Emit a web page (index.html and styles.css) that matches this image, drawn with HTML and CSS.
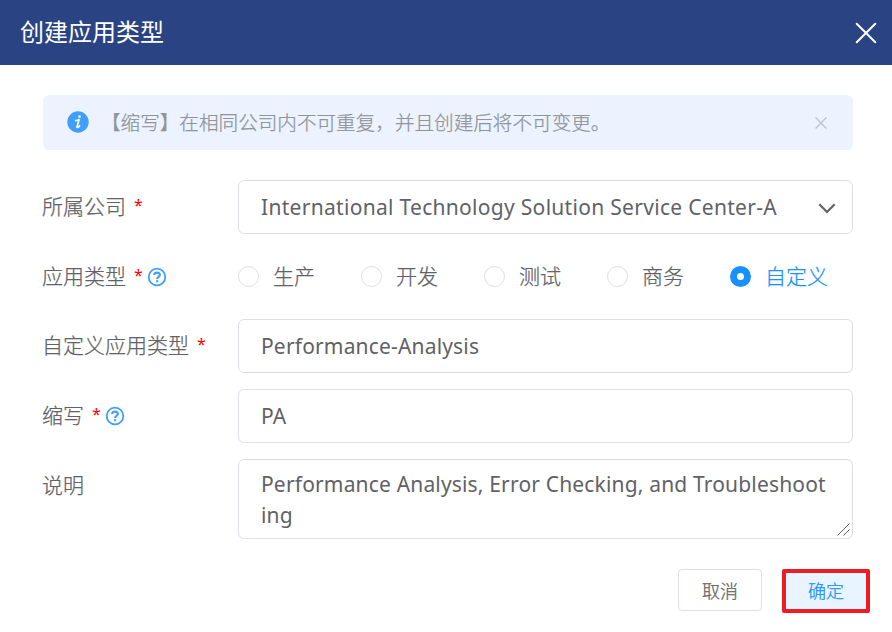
FILE: index.html
```html
<!DOCTYPE html>
<html lang="zh-CN">
<head>
<meta charset="utf-8">
<title>创建应用类型</title>
<link rel="stylesheet" href="styles.css">
</head>
<body>
<div class="dialog">
  <header class="dialog-header">
    <h1 class="title">创建应用类型</h1>
    <svg class="close" viewBox="0 0 22 22"><path d="M1.7 1.7 20.3 20.3M20.3 1.7 1.7 20.3"/></svg>
  </header>
  <main class="dialog-body">
    <div class="alert">
      <svg class="info" viewBox="0 0 22 22"><circle cx="11" cy="11" r="10.7"/><circle class="mark" cx="12.5" cy="5.6" r="1.3"/><path d="M8.7 9.6c1.2-.2 2.3-.5 3.3-.9l-1.9 6.9c-.3 1.3.6 1.2 2.5-.8"/></svg>
      <span class="alert-text">【缩写】在相同公司内不可重复，并且创建后将不可变更。</span>
      <svg class="alert-close" viewBox="0 0 12 12"><path d="M.6.6 11.4 11.4M11.4.6.6 11.4"/></svg>
    </div>
    <form class="form">
      <div class="row">
        <div class="label">所属公司<i class="star">*</i></div>
        <div class="control select"><span class="value company">International Technology Solution Service Center-A</span>
          <svg class="arrow" viewBox="0 0 18 11"><path d="M1.3 1.3 9 9 16.7 1.3"/></svg></div>
      </div>
      <div class="row radio-row">
        <div class="label">应用类型<i class="star">*</i>
          <svg class="help" viewBox="0 0 20 20"><circle cx="10" cy="10" r="8.3"/><path d="M7.2 8C7.2 4.7 12.9 4.8 12.9 7.8c0 2-2.8 2-2.8 4.1M10.1 13.3v2"/></svg></div>
        <div class="radios">
          <div class="radio"><b class="dot"></b><span>生产</span></div>
          <div class="radio"><b class="dot"></b><span>开发</span></div>
          <div class="radio"><b class="dot"></b><span>测试</span></div>
          <div class="radio"><b class="dot"></b><span>商务</span></div>
          <div class="radio checked"><b class="dot"></b><span>自定义</span></div>
        </div>
      </div>
      <div class="row">
        <div class="label">自定义应用类型<i class="star">*</i></div>
        <div class="control"><span class="value">Performance-Analysis</span></div>
      </div>
      <div class="row">
        <div class="label">缩写<i class="star">*</i>
          <svg class="help" viewBox="0 0 20 20"><circle cx="10" cy="10" r="8.3"/><path d="M7.2 8C7.2 4.7 12.9 4.8 12.9 7.8c0 2-2.8 2-2.8 4.1M10.1 13.3v2"/></svg></div>
        <div class="control"><span class="value">PA</span></div>
      </div>
      <div class="row">
        <div class="label">说明</div>
        <div class="control area"><span class="value">Performance Analysis, Error Checking, and Troubleshoot<br>ing</span>
          <svg class="grip" viewBox="0 0 13 13"><path d="M.5 12.5l12-12M6.5 12.5l6-6"/></svg></div>
      </div>
    </form>
    <footer class="footer">
      <div class="btn">取消</div>
      <div class="btn primary">确定</div>
    </footer>
  </main>
</div>
</body>
</html>
```
FILE: styles.css
```css
* { box-sizing: border-box; }
body { margin: 0; background: #fff; color: #606266; font-family: "Noto Sans", "Noto Sans CJK SC", sans-serif; font-size: 21px; }
svg { display: block; flex: none; fill: none; }
.dialog { width: 892px; height: 632px; overflow: hidden; }
.dialog-header { display: flex; align-items: center; justify-content: space-between; height: 65px; padding: 0 15px 0 20px; background: #2a4483; color: #fff; }
.title { margin: 0 0 4px; font: 400 24px/32px "Noto Sans CJK SC", sans-serif; }
.close { width: 22px; height: 22px; stroke: #fff; stroke-width: 2; stroke-linecap: round; }
.dialog-body { padding: 30px 39px 0 43px; }
.alert { display: flex; align-items: center; height: 55px; padding: 0 26px 0 24px; border-radius: 6px; background: #ecf3ff; }
.info { width: 22px; height: 22px; margin-bottom: 1px; }
.info circle { fill: #409eff; }
.info .mark { fill: #fff; }
.info path { stroke: #fff; stroke-width: 1.7; stroke-linecap: round; stroke-linejoin: round; }
.alert-text { flex: 1; margin: 0 0 2px 12px; color: #909399; font: 300 19.6px/30px "Noto Sans CJK SC", sans-serif; -webkit-text-stroke: .25px; white-space: nowrap; }
.alert-close { width: 12px; height: 12px; stroke: #c0c4cc; stroke-width: 1.4; }
.form { display: flex; flex-direction: column; gap: 16px; margin-top: 30px; }
.row { display: flex; }
.label { display: flex; align-items: center; width: 196px; height: 53px; margin-left: -1px; padding-bottom: 3px; font-family: "Noto Sans CJK SC", sans-serif; font-weight: 300; line-height: 32px; -webkit-text-stroke: .25px; }
.star { margin: 0 0 0 8px; width: 8px; color: red; font: 400 16px/24px "Noto Sans", sans-serif; -webkit-text-stroke: 0; }
.help { width: 20px; height: 20px; margin: 3px 0 0 5px; stroke: #409eff; stroke-width: 1.8; }
.help path { stroke-width: 2.2; }
.control { display: flex; align-items: center; flex: none; width: 615px; height: 54px; padding: 0 16px 0 22px; border: 1px solid #dcdfe6; border-radius: 6px; }
.select { justify-content: space-between; }
.value { line-height: 31px; letter-spacing: .17px; white-space: nowrap; }
.company { letter-spacing: .3px; }
.arrow { width: 18px; height: 11px; margin-top: 2px; stroke: #606266; stroke-width: 2.2; }
.radio-row { height: 53px; }
.radios { display: flex; }
.radio { display: flex; align-items: center; width: 123px; font-family: "Noto Sans CJK SC", sans-serif; font-weight: 300; -webkit-text-stroke: .25px; white-space: nowrap; }
.radio span { margin-bottom: 3px; }
.dot { flex: none; width: 21px; height: 21px; margin-right: 14px; border: 1px solid #dcdfe6; border-radius: 50%; }
.checked { color: #1890ff; }
.checked .dot { border: 7.5px solid #1890ff; }
.area { position: relative; align-items: flex-start; height: 80px; padding-top: 9px; }
.grip { position: absolute; right: 2px; bottom: 2px; width: 13px; height: 13px; stroke: #606266; stroke-width: 1; }
.footer { display: flex; justify-content: flex-end; gap: 20px; margin: 30px -17px 0 0; }
.btn { display: flex; align-items: center; justify-content: center; width: 84px; height: 42px; padding-bottom: 1px; border: 1px solid #dcdfe6; border-radius: 4px; font: 300 18px/26px "Noto Sans CJK SC", sans-serif; -webkit-text-stroke: .25px; }
.primary { width: 88px; height: 44px; padding-bottom: 3px; border: 4px solid #ed1c24; border-radius: 2px; background: #e8f4ff; color: #1890ff; }
```
